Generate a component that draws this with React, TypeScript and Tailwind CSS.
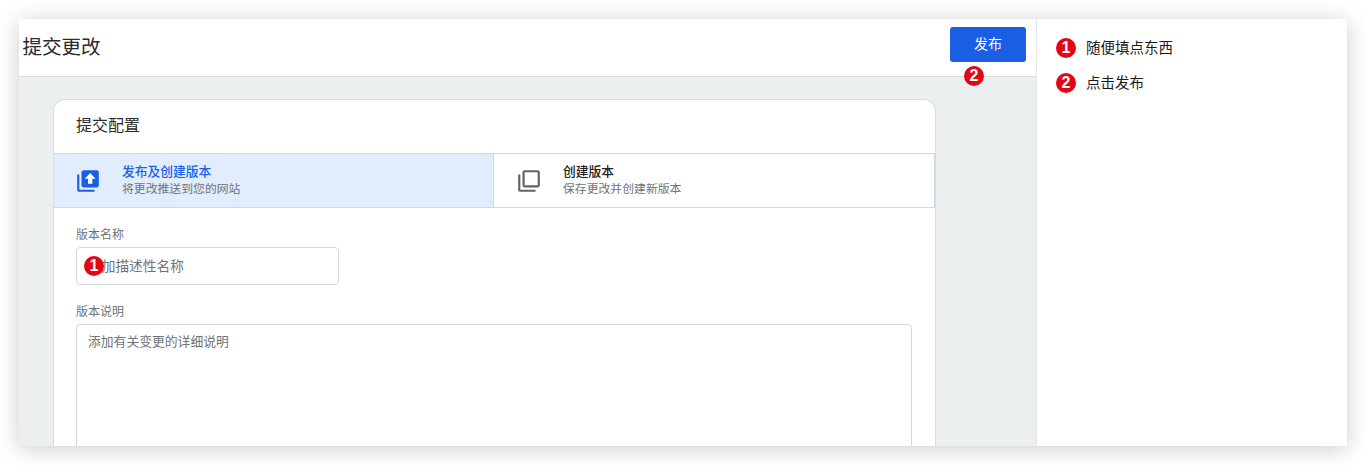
const fontStack = "font-['Roboto','Noto_Sans_CJK_SC',sans-serif]";

function Badge({ n }: { n: number }) {
  return (
    <span className="flex h-5 w-5 shrink-0 items-center justify-center rounded-full bg-[#e30613] font-['Liberation_Sans',sans-serif] text-[16px] leading-none font-bold text-white">
      {n}
    </span>
  );
}

function PublishIcon() {
  return (
    <svg viewBox="0 0 24 24" className="-ml-[0.5px] h-[26px] w-[26px] shrink-0" fill="#1a5ee6">
      <path d="M4 6H2v14c0 1.1.9 2 2 2h14v-2H4V6z" />
      <path d="M20 2H8c-1.1 0-2 .9-2 2v12c0 1.1.9 2 2 2h12c1.1 0 2-.9 2-2V4c0-1.1-.9-2-2-2z" />
      <path d="M14 4.5l-5 5.5h3v4.5h4V10h3z" fill="#fff" />
    </svg>
  );
}

function VersionIcon() {
  return (
    <svg viewBox="0 0 24 24" className="-ml-[0.5px] h-[26px] w-[26px] shrink-0" fill="#5f6368">
      <path d="M4 6H2v14c0 1.1.9 2 2 2h14v-2H4V6zm16-4H8c-1.1 0-2 .9-2 2v12c0 1.1.9 2 2 2h12c1.1 0 2-.9 2-2V4c0-1.1-.9-2-2-2zm0 14H8V4h12v12z" />
    </svg>
  );
}

export default function App() {
  return (
    <div className={`h-[465px] w-[1366px] overflow-hidden bg-white pt-[19px] pl-[19px] ${fontStack}`}>
      <div className="flex h-[427px] w-[1328px] overflow-hidden bg-white shadow-[0_3px_22px_rgba(0,0,0,0.2)]">
        {/* Left: GTM submit page */}
        <div className="relative flex w-[1017px] shrink-0 flex-col bg-[#ebeff0]">
          <header className="flex h-[58px] shrink-0 items-start justify-between border-b border-[#d9dce0] bg-white">
            <h1 className="mt-[16px] ml-[3.5px] text-[19.5px] leading-[26px] font-normal text-[#2b2b2b]">提交更改</h1>
            <button className="mt-2 mr-[10px] h-[35px] w-[76px] rounded-[3px] bg-[#1a5ee6] text-[14px] text-white">发布</button>
          </header>
          <div className="absolute top-[47px] left-[945px]">
            <Badge n={2} />
          </div>

          {/* Config card */}
          <div className="mt-[22px] ml-[34px] w-[883px] flex-1 rounded-t-[12px] border border-b-0 border-[#d9dce0] bg-white">
            <h2 className="px-[22px] pt-[14px] pb-[16px] text-[16px] leading-[23px] font-normal text-[#2b2b2b]">提交配置</h2>
            <div className="flex h-[55px] border-y border-[#d3d7de]">
              <div className="flex w-[440px] items-center gap-[21.5px] border-r border-[#d3d7de] bg-[#e1ecfc] pl-[21px]">
                <PublishIcon />
                <div>
                  <div className="text-[12.75px] leading-[15px] font-medium text-[#1a62e8]">发布及创建版本</div>
                  <div className="mt-[2px] text-[11.85px] leading-[17px] text-[#6f7378]">将更改推送到您的网站</div>
                </div>
              </div>
              <div className="flex flex-1 items-center gap-[21.5px] border-r border-[#d3d7de] pl-[22px]">
                <VersionIcon />
                <div>
                  <div className="text-[12.75px] leading-[15px] font-medium text-[#202124]">创建版本</div>
                  <div className="mt-[2px] text-[11.85px] leading-[17px] text-[#6f7378]">保存更改并创建新版本</div>
                </div>
              </div>
            </div>
            <div className="px-[22px] pt-[19px]">
              <label className="block text-[12px] leading-[17px] text-[#6f7378]">版本名称</label>
              <div className="relative mt-[3px] w-[263px]">
                <input
                  placeholder="添加描述性名称"
                  className="block h-[38px] w-full rounded-[4px] border border-[#d3d7de] bg-white px-[11px] text-[13.7px] placeholder:text-[#6f7378]"
                />
                <div className="absolute top-[9px] left-[8px]">
                  <Badge n={1} />
                </div>
              </div>
              <label className="mt-[19px] block text-[12px] leading-[17px] text-[#6f7378]">版本说明</label>
              <textarea
                placeholder="添加有关变更的详细说明"
                className="mt-[3px] block h-[160px] w-[836px] resize-none rounded-[4px] border border-[#d3d7de] bg-white px-[11px] py-[8px] text-[12.8px] leading-[18px] placeholder:text-[#6f7378]"
              />
            </div>
          </div>
        </div>

        {/* Right: steps */}
        <aside className="flex flex-1 flex-col gap-[15px] border-l border-[#e6e8ea] bg-white pt-[19px] pl-[19px]">
          <div className="flex h-5 items-center gap-[10px] text-[14.5px] text-[#1a1a1a]">
            <Badge n={1} />
            <span className="pt-[2px]">随便填点东西</span>
          </div>
          <div className="flex h-5 items-center gap-[10px] text-[14.5px] text-[#1a1a1a]">
            <Badge n={2} />
            <span className="pt-[2px]">点击发布</span>
          </div>
        </aside>
      </div>
    </div>
  );
}
